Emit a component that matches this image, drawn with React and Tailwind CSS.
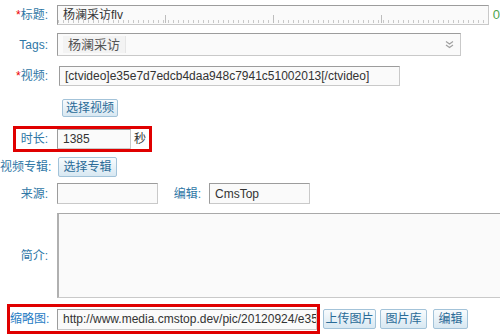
import React from 'react';

const FONT = "font-['Liberation_Sans','Noto_Sans_CJK_SC',sans-serif]";
const LABEL = 'text-[#2f77a6] text-[12px] text-right whitespace-nowrap';
const INPUT =
  'h-full border border-[#c9c9c9] border-t-[#9c9c9c] border-l-[#9c9c9c] bg-[#fafafa] text-[#333] text-[12px] pl-[5px] flex items-center overflow-hidden whitespace-nowrap';
const BTN =
  'h-full flex items-center justify-center border border-[#a3c3d9] rounded-[2px] bg-gradient-to-b from-[#f8fbfd] to-[#d8e8f2] text-[#2a6b97] text-[12px] whitespace-nowrap';

const Label = ({ children, star, className = 'w-[50px]' }) => (
  <div className={`${LABEL} ${className} shrink-0 pr-[2px]`}>
    {star && <span className="text-[#e00]">*</span>}
    {children}
  </div>
);

const DoubleChevron = () => (
  <svg width="9" height="9" viewBox="0 0 9 9" fill="none" stroke="#a0a0a0" strokeWidth="1.2">
    <path d="M1 1.5 L4.5 4 L8 1.5" />
    <path d="M1 5 L4.5 7.5 L8 5" />
  </svg>
);

export default function App() {
  return (
    <div className={`w-[500px] h-[336px] overflow-hidden bg-white pt-[5px] ${FONT}`}>
      {/* 标题 */}
      <div className="flex items-center h-[20px]">
        <Label star>标题:</Label>
        <div className={`${INPUT} ml-[7px] w-[434px] relative`}>
          杨澜采访flv
          <div className="absolute left-0 right-0 bottom-[1px] h-[3px] bg-[image:repeating-linear-gradient(90deg,#c8c8c8_0_1px,transparent_1px_5px)]" />
          <div className="absolute left-0 right-0 bottom-[1px] h-[8px] bg-[image:repeating-linear-gradient(90deg,transparent_0_107px,#bdbdbd_107px_108px)]" />
        </div>
        <span className="ml-[4px] text-[13px] text-[#4ea64e]">0</span>
      </div>

      {/* Tags */}
      <div className="flex items-center h-[23px] mt-[8px]">
        <Label>Tags:</Label>
        <div className={`${INPUT} ml-[7px] w-[404px] pl-[3px] justify-between pr-[6px]`}>
          <span className="h-[17px] px-[5px] flex items-center bg-[#f3f3f3] border-r border-[#e6e6e6] text-[13px] text-[#555]">
            杨澜采访
          </span>
          <DoubleChevron />
        </div>
      </div>

      {/* 视频 */}
      <div className="flex items-center h-[20px] mt-[10px]">
        <Label star>视频:</Label>
        <div className={`${INPUT} ml-[9px] w-[341px]`}>
          [ctvideo]e35e7d7edcb4daa948c7941c51002013[/ctvideo]
        </div>
      </div>

      {/* 选择视频 */}
      <div className="flex h-[18px] mt-[13px] pl-[62px]">
        <div className={`${BTN} w-[56px]`}>选择视频</div>
      </div>

      {/* 时长 */}
      <div className="flex items-center h-[26px] w-[139px] mt-[9px] ml-[13px] border-[3px] border-[#e00000]">
        <Label className="w-[34px]">时长:</Label>
        <div className="h-[20px] ml-[7px]">
          <div className={`${INPUT} w-[74px]`}>1385</div>
        </div>
        <span className="ml-[3px] text-[12px] text-[#333]">秒</span>
      </div>

      {/* 视频专辑 */}
      <div className="flex items-center h-[20px] mt-[5px]">
        <Label>视频专辑:</Label>
        <div className={`${BTN} ml-[8px] w-[59px]`}>选择专辑</div>
      </div>

      {/* 来源 / 编辑 */}
      <div className="flex items-center h-[21px] mt-[6px]">
        <Label>来源:</Label>
        <div className={`${INPUT} ml-[7px] w-[101px]`} />
        <Label className="w-[45px]">编辑:</Label>
        <div className={`${INPUT} ml-[6px] w-[101px]`}>CmsTop</div>
      </div>

      {/* 简介 */}
      <div className="flex items-center h-[85px] mt-[9px]">
        <Label>简介:</Label>
        <div className="ml-[7px] w-[450px] h-full shrink-0 border border-[#c9c9c9] border-t-[#a9a9a9] border-l-2 border-l-[#b0b0b0] bg-[#fafafa]" />
      </div>

      {/* 缩略图 */}
      <div className="flex items-center h-[30px] mt-[6px]">
        <div className="flex items-center h-full w-[313px] ml-[7px] border-[3px] border-[#e00000] overflow-hidden">
          <Label className="w-[40px] !text-[#1f7cc4]">缩略图:</Label>
          <div className="h-[21px] ml-[7px] shrink-0">
            <div className={`${INPUT} w-[260px]`}>http://www.media.cmstop.dev/pic/20120924/e35</div>
          </div>
        </div>
        <div className="flex h-[20px] ml-[3px] gap-[4px]">
          <div className={`${BTN} w-[53px]`}>上传图片</div>
          <div className={`${BTN} w-[47px]`}>图片库</div>
          <div className={`${BTN} w-[35px] ml-[2px]`}>编辑</div>
        </div>
      </div>
    </div>
  );
}
